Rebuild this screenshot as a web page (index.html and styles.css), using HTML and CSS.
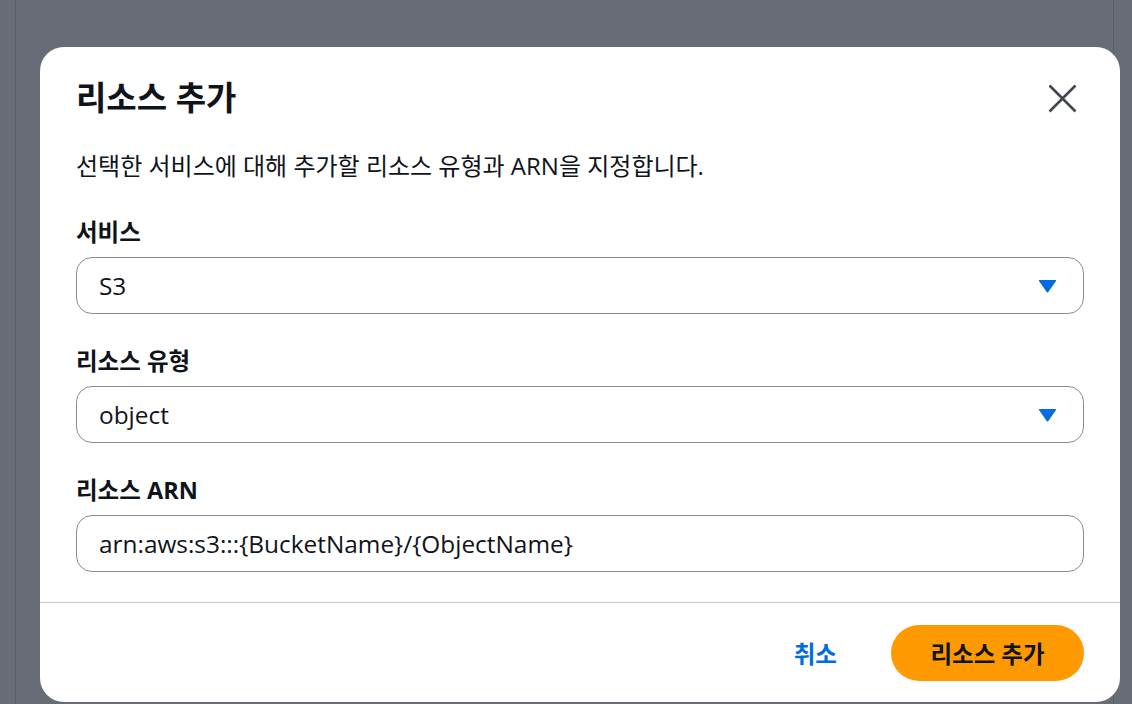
FILE: index.html
```html
<!DOCTYPE html>
<html lang="ko">
<head>
<meta charset="utf-8">
<title>리소스 추가</title>
<link rel="stylesheet" href="styles.css">
</head>
<body>
<div class="page">
  <div class="panel"></div>
</div>
<div class="overlay">
  <div class="modal" role="dialog" aria-labelledby="modal-title">
    <div class="modal-body">
      <div class="modal-header">
        <h2 id="modal-title" class="modal-title">리소스 추가</h2>
        <button class="close-btn" aria-label="닫기">
          <svg width="29" height="29" viewBox="0 0 29 29" aria-hidden="true">
            <path d="M1.5 1.5 L27.5 27.5 M27.5 1.5 L1.5 27.5" stroke="#424650" stroke-width="2.6" fill="none"/>
          </svg>
        </button>
      </div>
      <p class="modal-desc">선택한 서비스에 대해 추가할 리소스 유형과 ARN을 지정합니다.</p>

      <div class="field">
        <label class="field-label">서비스</label>
        <div class="select">
          <span class="select-value">S3</span>
          <svg class="caret" width="19" height="14" viewBox="0 0 19 14" aria-hidden="true">
            <path d="M1.5 1 H17.5 Q18.6 1 18 2 L10.3 13 Q9.5 14 8.7 13 L1 2 Q0.4 1 1.5 1 Z" fill="#006ce0"/>
          </svg>
        </div>
      </div>

      <div class="field">
        <label class="field-label">리소스 유형</label>
        <div class="select">
          <span class="select-value">object</span>
          <svg class="caret" width="19" height="14" viewBox="0 0 19 14" aria-hidden="true">
            <path d="M1.5 1 H17.5 Q18.6 1 18 2 L10.3 13 Q9.5 14 8.7 13 L1 2 Q0.4 1 1.5 1 Z" fill="#006ce0"/>
          </svg>
        </div>
      </div>

      <div class="field">
        <label class="field-label">리소스 ARN</label>
        <div class="input">arn:aws:s3:::{BucketName}/{ObjectName}</div>
      </div>
    </div>
    <div class="modal-footer">
      <button class="link-btn">취소</button>
      <button class="primary-btn">리소스 추가</button>
    </div>
  </div>
</div>
</body>
</html>
```

FILE: styles.css
```css
* { box-sizing: border-box; }

html, body {
  margin: 0;
  padding: 0;
  width: 1132px;
  height: 704px;
  overflow: hidden;
}

body {
  background: #686c76;
  font-family: "Open Sans", "Noto Sans CJK KR", sans-serif;
  color: #0f141a;
}

.page {
  height: 704px;
  padding: 0 18px 0 15px;
}

.panel {
  height: 100%;
  border-left: 1px solid #5a5e68;
  border-right: 1px solid #5a5e68;
}

.overlay {
  position: absolute;
  inset: 0;
}

.modal {
  position: absolute;
  left: 40px;
  top: 47px;
  width: 1080px;
  height: 655px;
  background: #ffffff;
  border-radius: 24px;
  display: flex;
  flex-direction: column;
  overflow: hidden;
}

.modal-body {
  padding: 33px 36px 30px 36px;
  border-bottom: 1px solid #c6c6cd;
}

.modal-header {
  display: flex;
  align-items: center;
  justify-content: space-between;
  height: 36px;
}

.modal-title {
  margin: 0;
  font-size: 33px;
  font-weight: 700;
  line-height: 36px;
  color: #0f141a;
}

.close-btn {
  border: 0;
  background: none;
  padding: 0;
  margin-right: 7px;
  display: flex;
  cursor: pointer;
}

.modal-desc {
  margin: 36px 0 0 0;
  font-size: 24px;
  line-height: 28px;
  color: #0f141a;
}

.field {
  margin-top: 38px;
  display: flex;
  flex-direction: column;
  gap: 11px;
}

.field + .field {
  margin-top: 33px;
}

.field-label {
  font-size: 23.5px;
  font-weight: 700;
  line-height: 28px;
  color: #0f141a;
}

.select,
.input {
  height: 57px;
  border: 1px solid #8c8c94;
  border-radius: 16px;
  padding: 0 26px 0 22px;
  display: flex;
  align-items: center;
  justify-content: space-between;
  font-size: 24.4px;
  color: #0f141a;
}

.caret {
  display: block;
}

.modal-footer {
  flex: 1;
  display: flex;
  align-items: flex-start;
  justify-content: flex-end;
  gap: 54px;
  padding: 22px 36px 0 36px;
}

.link-btn {
  border: 0;
  background: none;
  padding: 0;
  height: 56px;
  font-family: inherit;
  font-size: 23.5px;
  font-weight: 700;
  color: #006ce0;
  cursor: pointer;
}

.primary-btn {
  border: 0;
  width: 193px;
  height: 56px;
  border-radius: 28px;
  background: #ff9900;
  font-family: inherit;
  font-size: 23.5px;
  font-weight: 700;
  color: #0f141a;
  cursor: pointer;
}
```
